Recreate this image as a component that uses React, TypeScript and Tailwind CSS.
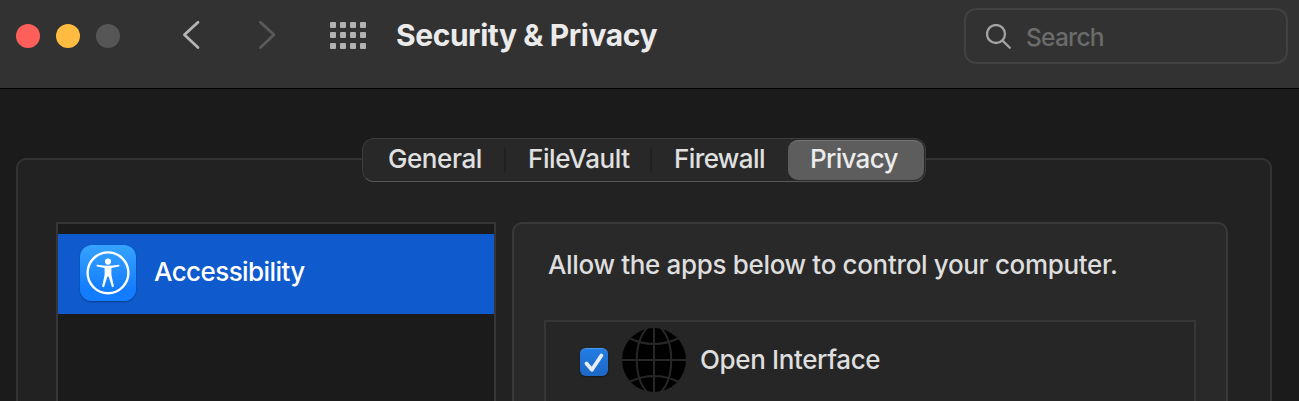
import React from "react";

const tabs = ["General", "FileVault", "Firewall"];
const tabClasses = [
  "w-[143px] pl-[25px] tracking-[-0.42px]",
  "w-[146px] pl-[22px] tracking-[-0.42px]",
  "w-[136px] pl-[22px] tracking-[-0.6px]",
];

function AppGrid() {
  return (
    <div className="ml-[50px] mt-[22px] grid h-[27px] w-[36px] grid-cols-4 gap-x-[4px] gap-y-[4px]">
      {Array.from({ length: 12 }, (_, i) => (
        <span key={i} className="h-[6px] w-[6px] rounded-[1px] bg-[#b2b2b2]" />
      ))}
    </div>
  );
}

function Toolbar() {
  return (
    <header className="flex h-[89px] shrink-0 items-start border-b border-black bg-[#323232] pl-4">
      <div className="mt-6 flex gap-4">
        <span className="h-6 w-6 rounded-full bg-[#ff5f5a]" />
        <span className="h-6 w-6 rounded-full bg-[#ffbc40]" />
        <span className="h-6 w-6 rounded-full bg-[#565656]" />
      </div>
      <svg className="ml-[60px] mt-5 shrink-0" width="24" height="30" fill="none" stroke="#b4b4b4" strokeWidth="2.8" strokeLinecap="round" strokeLinejoin="round">
        <path d="M18 2.2 4.4 14.8 18 27.5" />
      </svg>
      <svg className="ml-[52px] mt-5 shrink-0" width="24" height="30" fill="none" stroke="#5a5a5a" strokeWidth="2.8" strokeLinecap="round" strokeLinejoin="round">
        <path d="M4.4 2.2 18 14.8 4.4 27.5" />
      </svg>
      <AppGrid />
      <h1 className="ml-[30px] mt-[17px] whitespace-nowrap text-[30px] font-bold leading-[36px] tracking-[-0.43px] text-[#ebebeb]">
        Security &amp; Privacy
      </h1>
      <div className="ml-auto mr-[11px] mt-2 flex h-14 w-[324px] shrink-0 items-start rounded-[12px] border-2 border-[#414141] pl-[20px]">
        <svg className="mt-[14px] shrink-0" width="26" height="26" fill="none" stroke="#a3a3a3" strokeWidth="2.3" strokeLinecap="round">
          <circle cx="10" cy="10" r="9" />
          <path d="m16.6 16.6 7.2 7.2" />
        </svg>
        <span className="ml-[14px] mt-[12px] text-[24.5px] leading-[30px] tracking-[-0.75px] text-[#6b6b6b]">Search</span>
      </div>
    </header>
  );
}

function TabBar() {
  return (
    <nav className="relative z-10 mx-auto flex h-[44px] w-[564px] rounded-[12px] border border-[#3c3c3c] border-b-[#575757] bg-[#282828] text-[26px] leading-[32px] text-[#e0e0e0]">
      {tabs.map((tab, i) => (
        <div key={tab} className={`flex items-start pt-[4px] ${tabClasses[i]}`}>
          <span>{tab}</span>
          {i < 2 && <i className="ml-auto mt-[5px] h-6 w-[2px] bg-[#202020]" />}
        </div>
      ))}
      <div className="mt-px h-10 w-[136px] rounded-[10px] border-t border-[#777777] bg-[#5d5d5d] pl-[22px] pt-[2px] tracking-[-0.7px] text-[#ececec]">
        Privacy
      </div>
    </nav>
  );
}

function AccessibilityIcon() {
  return (
    <span className="ml-[22px] mt-[-2px] flex h-14 w-14 items-center justify-center rounded-[12px] bg-linear-to-b from-[#36a3ff] to-[#147cff] to-80% shadow-[0_1px_2px_rgba(0,0,0,0.35)]">
      <svg width="56" height="56" viewBox="0 0 56 56">
        <circle cx="28" cy="27.8" r="20.4" fill="none" stroke="#fff" strokeWidth="2.4" />
        <circle cx="28" cy="16.6" r="3.1" fill="#fff" />
        <path fill="#fff" d="M17.6 19.7Q28 21.9 38.4 19.7A.95.95 0 0 1 38.7 21.6L31.4 23.1V30L33.8 40.8A1.05 1.05 0 0 1 31.7 41.3L28.6 31.5H27.4L24.3 41.3A1.05 1.05 0 0 1 22.2 40.8L24.6 30V23.1L17.3 21.6A.95.95 0 0 1 17.6 19.7Z" />
      </svg>
    </span>
  );
}

function Globe() {
  return (
    <svg className="ml-[14px] mt-[5px] shrink-0" width="64" height="66" viewBox="0 0 64 66">
      <circle cx="32" cy="33" r="32" fill="#000" />
      <g fill="none" stroke="#272727" strokeWidth="2">
        <path d="M32 0V66M0 33H64M8 11.5Q32 22.5 56 11.5M8 54.5Q32 43.5 56 54.5" />
        <path d="M26 0C11 15 11 51 26 66M38 0C53 15 53 51 38 66" />
      </g>
    </svg>
  );
}

function Checkbox() {
  return (
    <span className="ml-[34px] mt-[26px] h-7 w-7 shrink-0 rounded-[6px] border-t border-[#4b9af2] bg-linear-to-b from-[#227de5] to-[#1d67c5] shadow-[0_1px_2px_rgba(0,0,0,0.4)]">
      <svg width="28" height="27" fill="none" stroke="#e5effb" strokeWidth="3.8" strokeLinecap="round" strokeLinejoin="round">
        <path d="m6.5 14.5 5.4 6.2L21.4 6.5" />
      </svg>
    </span>
  );
}

export default function App() {
  return (
    <div className="flex h-[401px] w-[1299px] flex-col overflow-hidden bg-[#1b1b1b] font-[Inter,sans-serif] font-[450]">
      <Toolbar />
      <main className="w-[1288px] flex-1 pt-[49px]">
        <TabBar />
        <section className="ml-4 mt-[-24px] flex h-[260px] w-[1256px] items-start gap-4 rounded-[10px] border-2 border-[#333333] bg-[#222222] pl-[38px] pt-[62px]">
          <div className="h-[200px] w-[440px] border-2 border-[#363636] bg-[#1b1b1b] pt-[10px]">
            <div className="flex h-20 items-center bg-[#0f5bce]">
              <AccessibilityIcon />
              <span className="ml-[18px] mt-[-4px] text-[26px] leading-[32px] tracking-[-0.57px] text-white">Accessibility</span>
            </div>
          </div>
          <div className="h-[200px] w-[716px] rounded-[10px] border-2 border-[#393939] bg-[#292929] pl-[30px] pt-[25px]">
            <p className="ml-[4px] whitespace-nowrap text-[26px] leading-[32px] tracking-[-0.34px] text-[#dedede]">
              Allow the apps below to control your computer.
            </p>
            <div className="mt-[39px] flex h-[120px] w-[652px] items-start border-2 border-[#363636] bg-[#262626]">
              <Checkbox />
              <Globe />
              <span className="ml-[14px] mt-[22px] whitespace-nowrap text-[26px] leading-[32px] tracking-[-0.37px] text-[#dedede]">Open Interface</span>
            </div>
          </div>
        </section>
      </main>
    </div>
  );
}
